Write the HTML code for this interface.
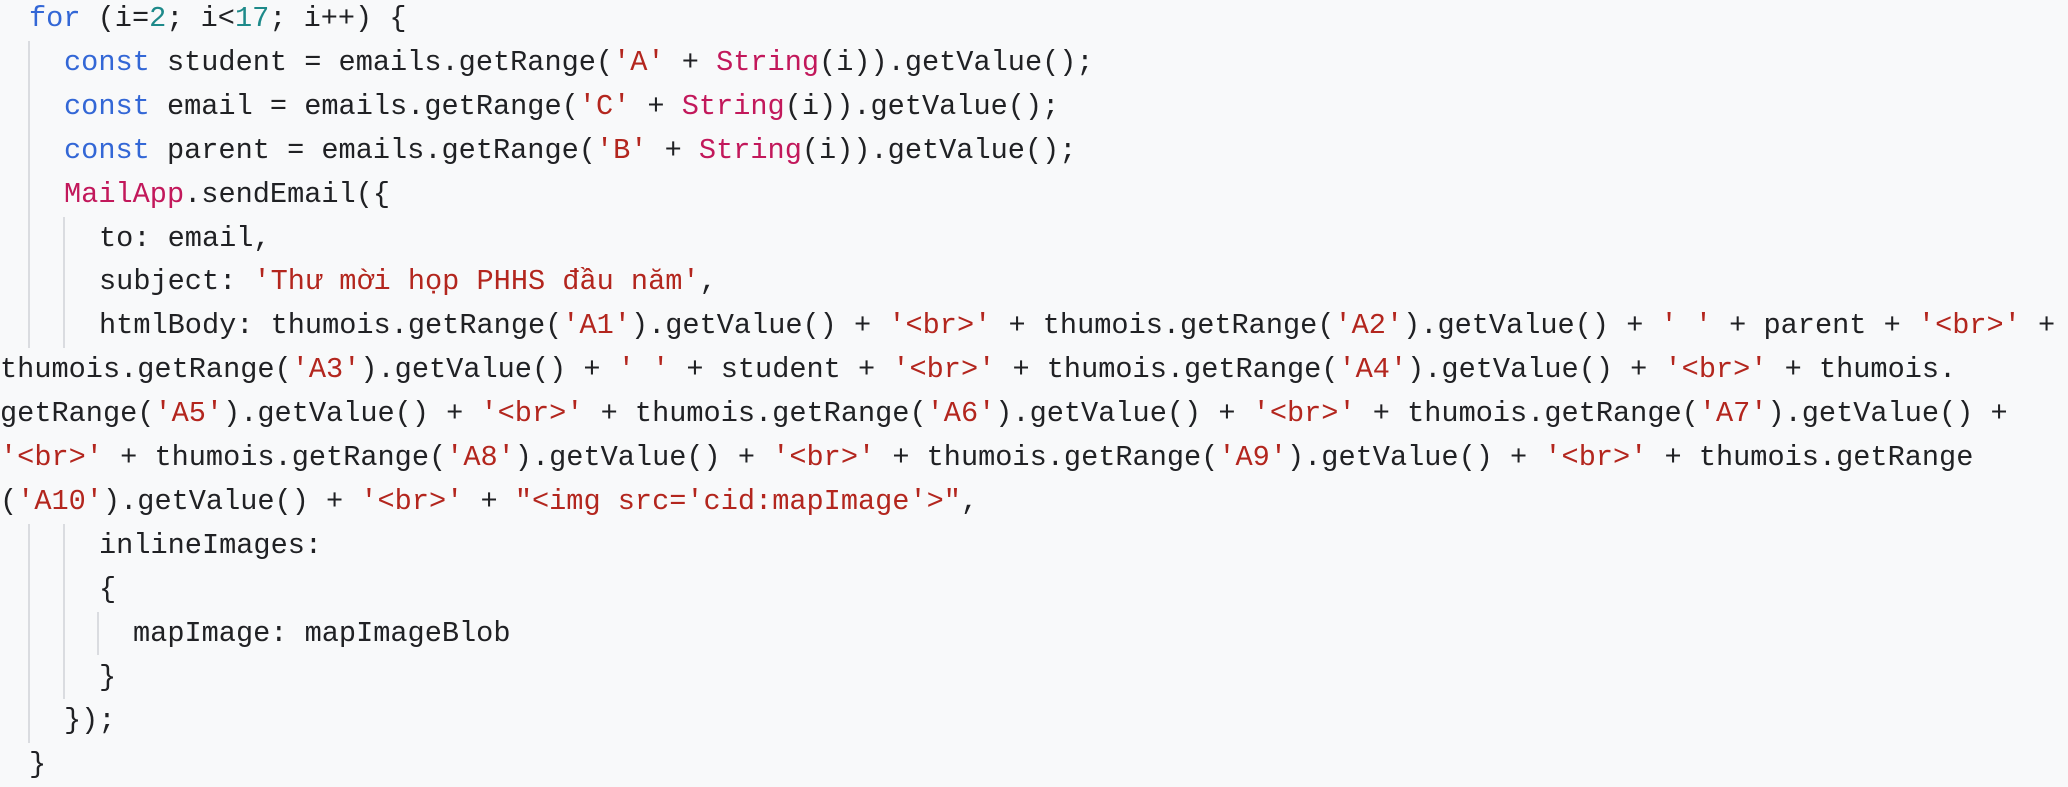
<!DOCTYPE html>
<html><head><meta charset="utf-8"><style>
html,body{margin:0;padding:0;background:#f8f9fa;width:2068px;height:784px;overflow:hidden}
.w{position:absolute;left:0;top:3px;width:2068px;height:784px}
.l{position:absolute;height:43.9px;line-height:43.9px;white-space:pre;font-family:"Liberation Mono",monospace;font-size:28.6px;color:#202124}
.k{color:#3367d6}.n{color:#1e8a8a}.s{color:#b3261e}.c{color:#c2185b}
.g{position:absolute;width:2px;background:#dadce0}
</style></head><body><div class="w">
<div class="l" style="left:29px;top:-6px"><span class="k">for</span> (i=<span class="n">2</span>; i&lt;<span class="n">17</span>; i++) {</div>
<div class="l" style="left:64px;top:37.9px"><span class="k">const</span> student = emails.getRange(<span class="s">'A'</span> + <span class="c">String</span>(i)).getValue();</div>
<div class="l" style="left:64px;top:81.8px"><span class="k">const</span> email = emails.getRange(<span class="s">'C'</span> + <span class="c">String</span>(i)).getValue();</div>
<div class="l" style="left:64px;top:125.7px"><span class="k">const</span> parent = emails.getRange(<span class="s">'B'</span> + <span class="c">String</span>(i)).getValue();</div>
<div class="l" style="left:64px;top:169.6px"><span class="c">MailApp</span>.sendEmail({</div>
<div class="l" style="left:99px;top:213.5px">to: email,</div>
<div class="l" style="left:99px;top:257.4px">subject: <span class="s">'Thư mời họp PHHS đầu năm'</span>,</div>
<div class="l" style="left:99px;top:301.3px">htmlBody: thumois.getRange(<span class="s">'A1'</span>).getValue() + <span class="s">'&lt;br&gt;'</span> + thumois.getRange(<span class="s">'A2'</span>).getValue() + <span class="s">' '</span> + parent + <span class="s">'&lt;br&gt;'</span> +</div>
<div class="l" style="left:0;top:345.2px">thumois.getRange(<span class="s">'A3'</span>).getValue() + <span class="s">' '</span> + student + <span class="s">'&lt;br&gt;'</span> + thumois.getRange(<span class="s">'A4'</span>).getValue() + <span class="s">'&lt;br&gt;'</span> + thumois.</div>
<div class="l" style="left:0;top:389.1px">getRange(<span class="s">'A5'</span>).getValue() + <span class="s">'&lt;br&gt;'</span> + thumois.getRange(<span class="s">'A6'</span>).getValue() + <span class="s">'&lt;br&gt;'</span> + thumois.getRange(<span class="s">'A7'</span>).getValue() +</div>
<div class="l" style="left:0;top:433px"><span class="s">'&lt;br&gt;'</span> + thumois.getRange(<span class="s">'A8'</span>).getValue() + <span class="s">'&lt;br&gt;'</span> + thumois.getRange(<span class="s">'A9'</span>).getValue() + <span class="s">'&lt;br&gt;'</span> + thumois.getRange</div>
<div class="l" style="left:0;top:476.9px">(<span class="s">'A10'</span>).getValue() + <span class="s">'&lt;br&gt;'</span> + <span class="s">"&lt;img src='cid:mapImage'&gt;"</span>,</div>
<div class="l" style="left:99px;top:520.8px">inlineImages:</div>
<div class="l" style="left:99px;top:564.7px">{</div>
<div class="l" style="left:133px;top:608.6px">mapImage: mapImageBlob</div>
<div class="l" style="left:99px;top:652.5px">}</div>
<div class="l" style="left:64px;top:696.4px">});</div>
<div class="l" style="left:29px;top:740.3px">}</div>
<div class="g" style="left:28px;top:37.9px;height:307.3px"></div>
<div class="g" style="left:28px;top:520.8px;height:219.5px"></div>
<div class="g" style="left:63px;top:213.5px;height:131.7px"></div>
<div class="g" style="left:63px;top:520.8px;height:175.6px"></div>
<div class="g" style="left:97px;top:608.6px;height:43.9px"></div>
</div></body></html>
